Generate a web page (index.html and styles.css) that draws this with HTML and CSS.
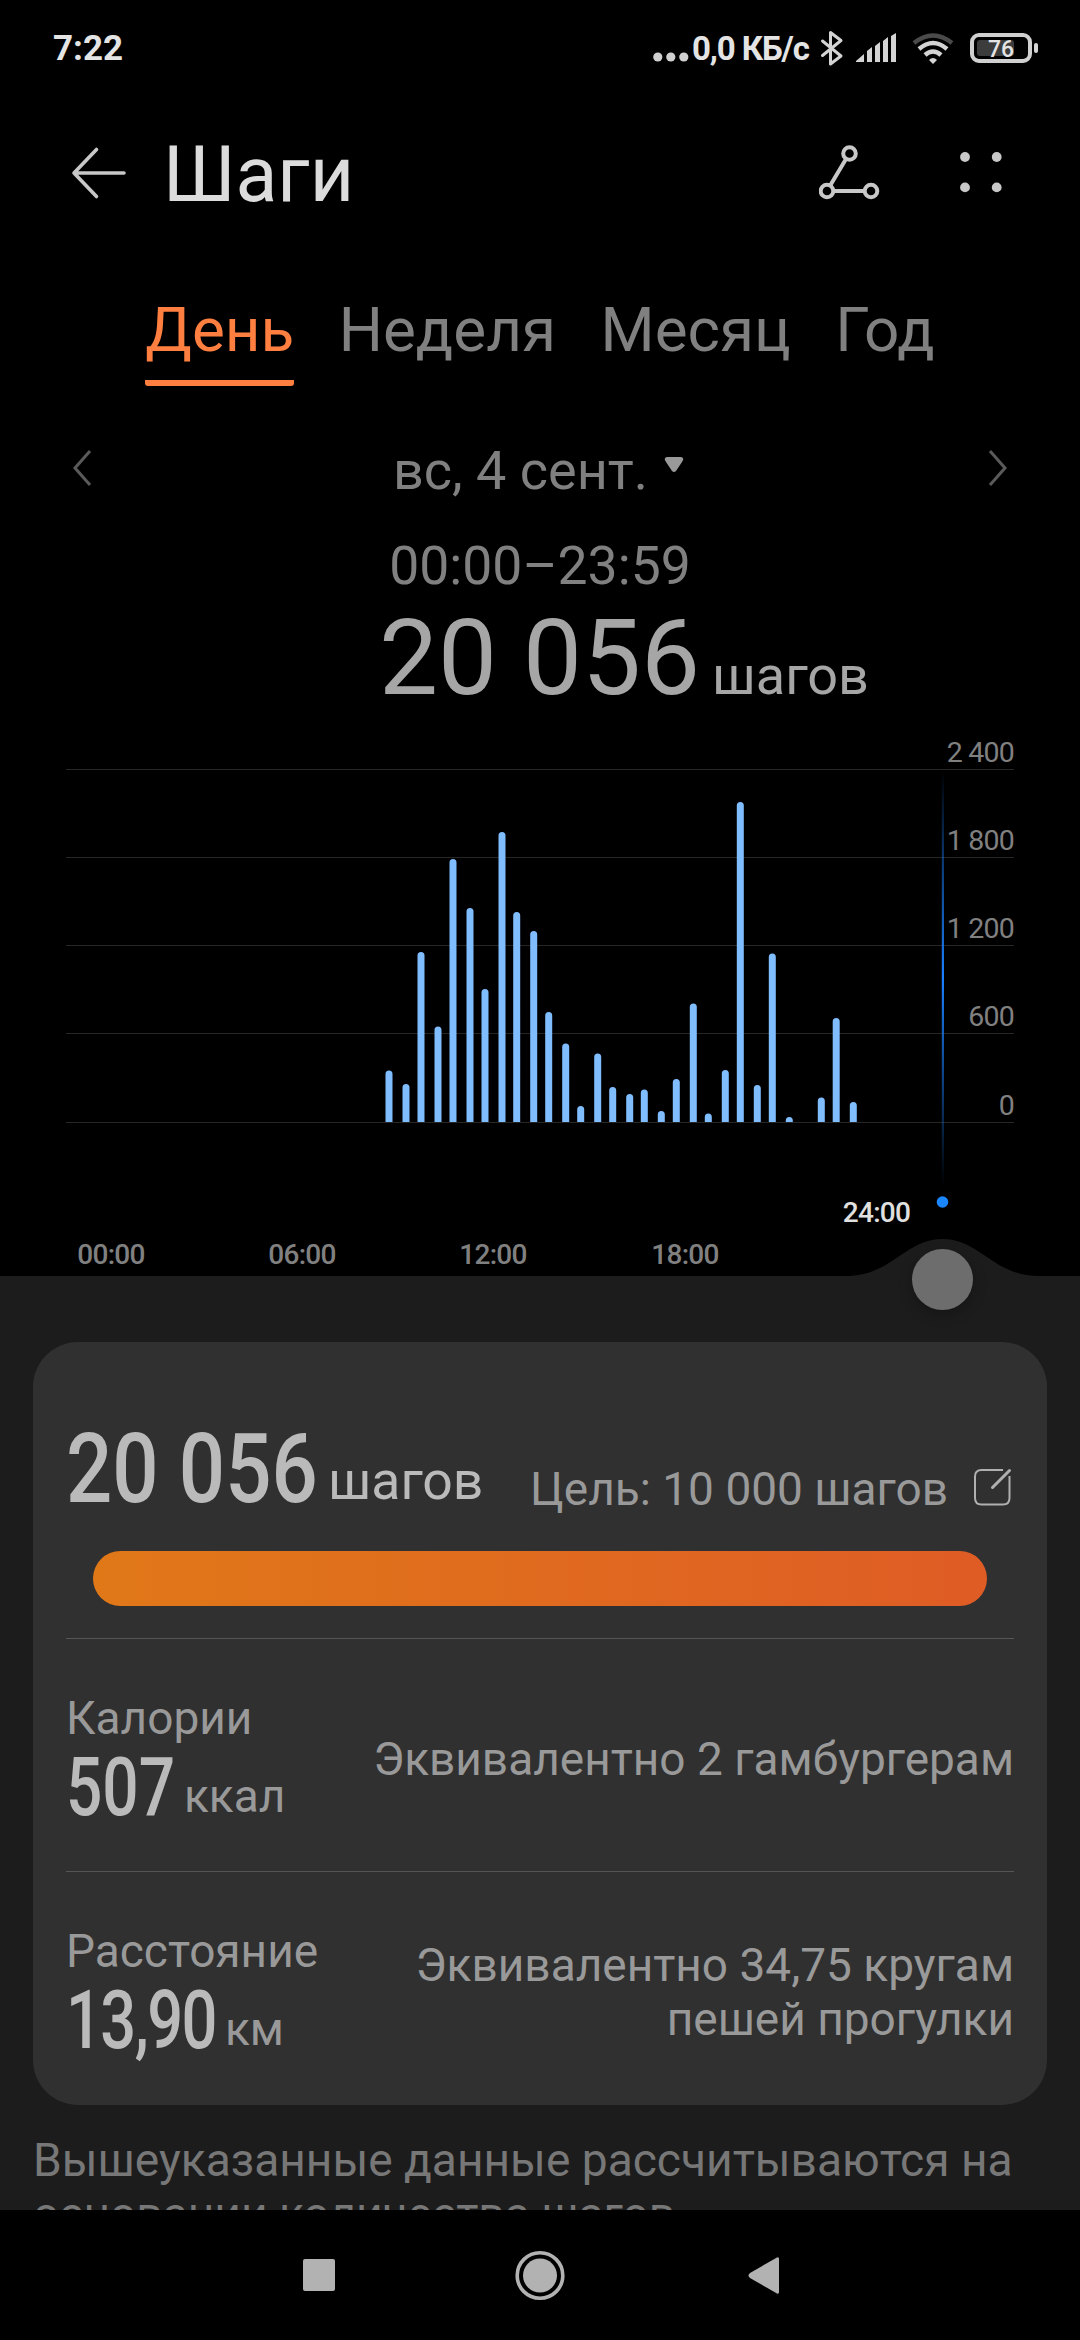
FILE: index.html
```
<!DOCTYPE html>
<html lang="ru">
<head>
<meta charset="utf-8">
<title>Шаги</title>
<link rel="stylesheet" href="styles.css">
</head>
<body>
<div class="screen">
  <header class="status">
    <span class="clock">7:22</span>
    <span class="net"><svg class="more" width="36" height="10" viewBox="0 0 36 10"><circle cx="4.8" cy="5" r="4.6"/><circle cx="17.8" cy="5" r="4.6"/><circle cx="30.8" cy="5" r="4.6"/></svg><span>0,0 КБ/с</span></span>
    <svg class="sysicons" width="222" height="40" viewBox="818 28 222 40">
      <path class="line" d="M822.500 41l18.500 15-10.500 8V32.500l10.500 8-18.500 15"/>
      <path class="solid" d="M856 62v-1l8-7v8zM867 51l5-4v15h-5zM875 46l5-4v20h-5zM883 41l5-4v25h-5zM891 36l5-3v29h-5z"/>
      <path class="wifi dim" d="M914 43Q933 28 952 43"/>
      <path class="wifi" d="M919 49Q933 37 947 49M925 55Q933 48 941 55"/>
      <path class="solid" d="M933 64l-4-4q4-4 8 0z"/>
      <rect class="level" x="977" y="40" width="37" height="16" rx="3"/>
      <rect class="case" x="972" y="35" width="58" height="26" rx="7"/>
      <rect class="solid" x="1034" y="43" width="4" height="10" rx="2"/>
      <text class="charge" x="1001" y="56.500" text-anchor="middle">76</text>
    </svg>
  </header>

  <div class="titlebar">
    <svg class="back" width="56" height="54" viewBox="0 0 56 54"><path d="M26.500 3.500L4 27l22.500 23.500M4 27h50"/></svg>
    <h1>Шаги</h1>
    <svg class="route" width="64" height="60" viewBox="0 0 64 60"><path d="M27 15L11.500 41M15 47h30"/><circle cx="30.500" cy="9.500" r="6.300"/><circle cx="8" cy="47" r="6.300"/><circle cx="52" cy="47" r="6.300"/></svg>
    <svg class="menu" width="46" height="46" viewBox="0 0 46 46"><circle cx="6" cy="7" r="4.900"/><circle cx="37.700" cy="7" r="4.900"/><circle cx="6" cy="37.400" r="4.900"/><circle cx="37.700" cy="37.400" r="4.900"/></svg>
  </div>

  <nav class="tabs">
    <span class="tab active">День</span><span class="tab">Неделя</span><span class="tab">Месяц</span><span class="tab">Год</span>
  </nav>

  <div class="datebar">
    <svg width="22" height="40" viewBox="0 0 22 40"><path d="M19 3L4 20l15 17"/></svg>
    <div class="date"><span>вс, 4 сент.</span><svg class="caret" width="20" height="16" viewBox="0 0 20 16"><path d="M3 0h14q4 1 1 5l-6 9q-2 2-4 0L2 5q-3-4 1-5z"/></svg></div>
    <svg width="22" height="40" viewBox="0 0 22 40"><path d="M3 3l15 17L3 37"/></svg>
  </div>
  <div class="range">00:00–23:59</div>
  <div class="total"><span class="value">20 056</span><span class="unit">шагов</span></div>

  <svg class="chart" width="1080" height="556" viewBox="0 720 1080 556">
    <defs>
      <linearGradient id="cursor" x1="0" y1="0" x2="0" y2="1">
        <stop offset="0" stop-color="#1a80ff" stop-opacity="0"/>
        <stop offset=".5" stop-color="#1a80ff"/>
        <stop offset="1" stop-color="#1a80ff" stop-opacity="0"/>
      </linearGradient>
      <clipPath id="plot"><rect x="0" y="720" width="1080" height="402"/></clipPath>
    </defs>
    <path class="grid" d="M66 769.500h948M66 857.500h948M66 945.500h948M66 1033.500h948M66 1122.500h948"/>
    <g class="bars" clip-path="url(#plot)">
      <path d="M389 1130V1074M406 1130V1087.500M421 1130V955.500M438 1130V1030M453 1130V862.500M470 1130V911.500M485 1130V992.500M502 1130V835.500M516.700 1130V915.500M533.700 1130V934.500M548.700 1130V1015.500M565.700 1130V1047M580.700 1130V1109.500M597.700 1130V1057M612.700 1130V1090.500M629.700 1130V1097.500M644.300 1130V1093M661.300 1130V1114.500M676.300 1130V1082.500M693.300 1130V1007M708.300 1130V1117M725.300 1130V1073.500M740.300 1130V805.500M757.300 1130V1088.500M772.300 1130V957M789.300 1130V1120.500M821.300 1130V1101M836.200 1130V1021.500M853.300 1130V1105.500"/>
    </g>
    <rect x="941.800" y="770" width="2.200" height="415" fill="url(#cursor)"/>
    <circle cx="942.500" cy="1202" r="5.800" fill="#1a86ff"/>
    <g class="ylabels" text-anchor="end">
      <text x="1014" y="762">2 400</text><text x="1014" y="850">1 800</text><text x="1014" y="938">1 200</text><text x="1014" y="1026">600</text><text x="1014" y="1115">0</text>
    </g>
    <g class="xlabels" text-anchor="middle">
      <text x="111" y="1264">00:00</text><text x="302" y="1264">06:00</text><text x="493" y="1264">12:00</text><text x="685" y="1264">18:00</text>
      <text class="now" x="876.500" y="1222">24:00</text>
    </g>
    <path fill="#1c1c1c" d="M846 1276C892 1276 905 1239 942.500 1239S993 1276 1039 1276z"/>
  </svg>

  <main class="details">
    <div class="thumb"></div>
    <section class="card">
      <div class="goalrow">
        <div class="steps"><span class="din"><span>20 056</span></span><span class="unit">шагов</span></div>
        <span class="goal">Цель: 10 000 шагов</span>
        <svg class="edit" width="42" height="42" viewBox="0 0 42 42"><path d="M31 3H9.500Q3 3 3 9.500V31q0 6.500 6.500 6.500H31q6.500 0 6.500-6.500V9"/><path class="pen" d="M20.500 20.500L37.500 3.500"/></svg>
      </div>
      <div class="progress"></div>
      <div class="row">
        <div class="metric"><span class="name">Калории</span><div class="amount"><span class="din din-kcal"><span>507</span></span><span class="unit">ккал</span></div></div>
        <div class="equal">Эквивалентно 2 гамбургерам</div>
      </div>
      <div class="row">
        <div class="metric"><span class="name">Расстояние</span><div class="amount"><span class="din din-km"><span>13,90</span></span><span class="unit">км</span></div></div>
        <div class="equal">Эквивалентно 34,75 кругам<br>пешей прогулки</div>
      </div>
    </section>
    <p class="note">Вышеуказанные данные рассчитываются на основании количества шагов.</p>
  </main>

  <footer class="navbar">
    <svg width="1080" height="130" viewBox="0 2210 1080 130">
      <rect x="303" y="2259" width="32" height="32" rx="2"/>
      <circle cx="540" cy="2275.500" r="17"/>
      <circle class="ring" cx="540" cy="2275.500" r="22.800"/>
      <path d="M777 2257.500q2-1 2 1.500v33q0 2.500-2 1.500L750 2278q-3-2.500 0-5z"/>
    </svg>
  </footer>
</div>
</body>
</html>
```

FILE: styles.css
```
* { box-sizing: border-box; }
body { margin: 0; background: #000; font-family: Roboto, "Liberation Sans", sans-serif; color: #808080; }
svg { display: block; flex: none; }
.screen { width: 1080px; height: 2340px; overflow: hidden; display: flex; flex-direction: column; background: #000; }

.status { height: 98px; flex: none; display: flex; align-items: flex-start; padding: 28px 40px 0 53px; color: #e4e4e4; font-size: 33px; line-height: 42px; font-weight: 700; }
.clock { font-size: 35px; }
.net { margin-left: auto; display: flex; align-items: flex-end; width: 162px; margin-right: 3px; white-space: nowrap; letter-spacing: -1.1px; }
.more { fill: #d0d0d0; margin: 0 3px 8px 0; }
.line { fill: none; stroke: #d4d4d4; stroke-width: 3; stroke-linejoin: round; stroke-linecap: round; }
.solid { fill: #d4d4d4; }
.wifi { fill: none; stroke: #d4d4d4; stroke-width: 4.4; }
.dim { stroke: #4a4a4a; }
.level { fill: #3c3c3c; }
.case { fill: none; stroke: #d0d0d0; stroke-width: 4; }
.charge { font: 500 23px Roboto, sans-serif; fill: #e4e4e4; }

.titlebar { height: 170px; flex: none; display: flex; padding: 0 53px 0 70px; }
.titlebar path, .titlebar circle { fill: none; stroke: #c8c8c8; stroke-width: 3.6; stroke-linecap: round; stroke-linejoin: round; }
.titlebar .route path, .titlebar .route circle { stroke-width: 4; }
.back { margin-top: 48px; }
h1 { margin: 32px auto 0 37px; font-size: 77px; line-height: 90px; font-weight: 400; color: #dcdcdc; }
.route { margin: 46px 76px 0 0; }
.menu { margin: 52px 22px 0 0; }
.titlebar .menu circle { fill: #c8c8c8; stroke: none; }

.tabs { height: 130px; flex: none; display: flex; justify-content: center; gap: 44.500px; padding-top: 26px; font-size: 62px; line-height: 72px; }
.tab { height: 92px; }
.active { color: #ff7f40; border-bottom: 6px solid #ff7f40; border-radius: 3px; }

.datebar { height: 140px; flex: none; display: flex; align-items: center; justify-content: space-between; padding: 0 71px; font-size: 54px; line-height: 64px; }
.datebar > svg path { fill: none; stroke: #5a5a5a; stroke-width: 3; }
.date { display: flex; gap: 16px; padding: 5px 3px 0 0; }
.caret { margin-top: 18px; fill: #999; }
.range { height: 70px; flex: none; margin-top: -4px; text-align: center; font-size: 53.500px; line-height: 64px; }
.total { height: 116px; flex: none; display: flex; align-items: baseline; padding-left: 379px; color: #a6a6a6; line-height: 110px; }
.value { font-size: 105px; }
.total .unit, .steps .unit { font-size: 54px; }
.total .unit { margin-left: 12px; }

.grid { stroke: #262626; stroke-width: 1; }
.bars { stroke: #80bdff; stroke-width: 7; stroke-linecap: round; }
.ylabels { font-size: 28.500px; letter-spacing: -.8px; fill: #808080; }
.xlabels { font-size: 28px; font-weight: 500; letter-spacing: -.7px; fill: #808080; }
.now { fill: #e0e0e0; }

.details { position: relative; height: 934px; flex: none; overflow: visible; background: #1c1c1c; padding: 66px 33px 0; }
.thumb { position: absolute; left: 912px; top: -27px; width: 61px; height: 61px; border-radius: 50%; background: #6d6d6d; box-shadow: 0 4px 14px rgba(0,0,0,.28); }
.card { height: 763px; border-radius: 45px; background: #303030; padding: 0 33px; }
.goalrow { height: 209px; display: flex; align-items: flex-start; }
.steps { display: flex; align-items: baseline; padding-top: 72px; line-height: 110px; color: #bababa; }
.steps .unit { position: relative; top: -3px; font-size: 53.500px; }
.din { display: block; width: 262px; font-size: 97px; font-weight: 500; color: #bababa; white-space: nowrap; }
.din span { display: inline-block; transform: scaleX(.84); transform-origin: 0 50%; }
.goal { margin: 120px 24px 0 auto; font-size: 46px; line-height: 54px; color: #999; }
.edit { margin-top: 125px; }
.edit path { fill: none; stroke: #b0b0b0; stroke-width: 2; }
.edit .pen { stroke-width: 3; stroke-linecap: round; }
.progress { height: 55px; margin: 0 27px 32px; border-radius: 28px; background: linear-gradient(90deg, #e07818, #df5c25); }
.row { height: 233px; border-top: 1px solid #555; display: flex; justify-content: space-between; align-items: flex-start; font-size: 46px; line-height: 54px; color: #999; }
.row + .row .equal { padding-top: 66px; }
.name { display: block; margin-top: 52px; }
.amount { display: flex; align-items: baseline; line-height: 80px; }
.amount .unit { font-size: 46px; }
.amount .din span { position: relative; top: 3px; transform: scaleX(.79); }
.din-kcal { width: 118px; font-size: 81px; }
.din-km { width: 159px; font-size: 81px; letter-spacing: -2px; }
.amount .din-km span { transform: scaleX(.78); }
.equal { text-align: right; padding-top: 93px; }
.note { margin: 28px 0 0; font-size: 46.100px; line-height: 54px; color: #777; }
.navbar { position: relative; height: 130px; flex: none; background: #000; fill: #b2b2b2; }
.ring { fill: none; stroke: #b2b2b2; stroke-width: 3.600; }
```
